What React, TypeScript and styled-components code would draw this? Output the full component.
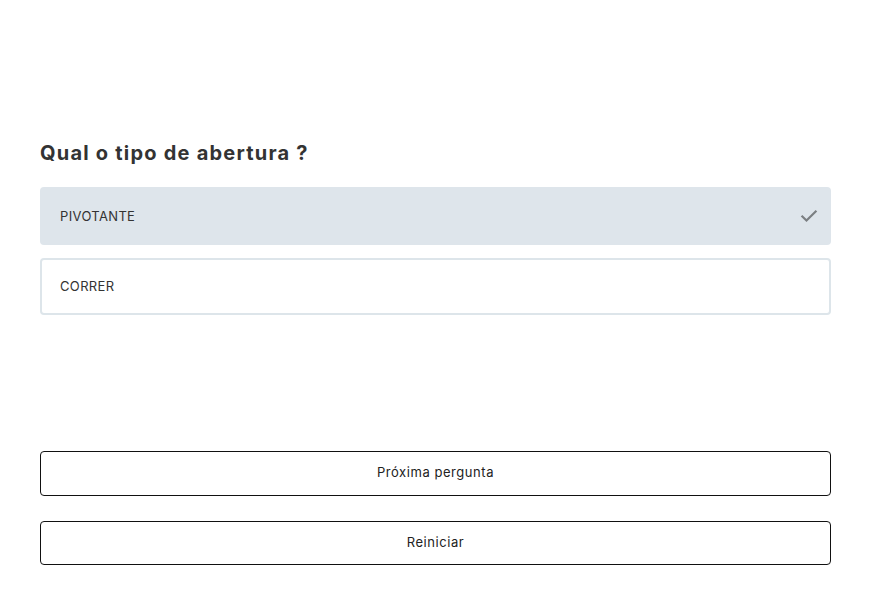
import React, { useState } from "react";
import styled, { createGlobalStyle } from "styled-components";

const Global = createGlobalStyle`
  body { margin: 0; background: #fff; font-family: "Inter", "Lato", sans-serif; }
`;

const Page = styled.div`
  padding: 140px 41px 0 40px;
  display: flex;
  flex-direction: column;
`;

const Title = styled.h2`
  margin: 0 0 21px;
  font-size: 20px;
  line-height: 26px;
  font-weight: 700;
  color: #333;
  letter-spacing: 1.22px;
`;

const Options = styled.div`
  display: flex;
  flex-direction: column;
  gap: 13px;
`;

const Option = styled.button<{ $selected: boolean }>`
  display: flex;
  align-items: center;
  justify-content: space-between;
  height: ${(p) => (p.$selected ? "58px" : "57px")};
  padding: 0 12px ${(p) => (p.$selected ? "0" : "2px")} ${(p) => (p.$selected ? "20px" : "18px")};
  box-sizing: border-box;
  border-radius: 4px;
  border: ${(p) => (p.$selected ? "none" : "2px solid #dde5ea")};
  background: ${(p) => (p.$selected ? "#dee5eb" : "#fff")};
  font-family: inherit;
  font-size: 13px;
  letter-spacing: 0.35px;
  color: #333;
  text-align: left;
  cursor: pointer;
`;

const Actions = styled.div`
  display: flex;
  flex-direction: column;
  gap: 25px;
  margin-top: 136px;
`;

const ActionButton = styled.button<{ $h?: number }>`
  height: ${(p) => p.$h ?? 45}px;
  padding: 0 0 3px;
  border: 1px solid #111;
  border-radius: 4px;
  background: #fff;
  font-family: inherit;
  font-size: 13px;
  letter-spacing: 0.55px;
  color: #222;
  cursor: pointer;
`;

const Check = () => (
  <svg width="20" height="20" viewBox="0 0 24 24" fill="none" stroke="#7b7f82" strokeWidth="2.6" strokeLinecap="square">
    <path d="M4 12.5l5 5L20 6.5" />
  </svg>
);

export default function App() {
  const [sel, setSel] = useState(0);
  const opts = ["PIVOTANTE", "CORRER"];
  return (
    <>
      <Global />
      <Page>
        <Title>Qual o tipo de abertura ?</Title>
        <Options>
          {opts.map((o, i) => (
            <Option key={o} $selected={sel === i} onClick={() => setSel(i)}>
              <span>{o}</span>
              {sel === i && <Check />}
            </Option>
          ))}
        </Options>
        <Actions>
          <ActionButton>Próxima pergunta</ActionButton>
          <ActionButton $h={44}>Reiniciar</ActionButton>
        </Actions>
      </Page>
    </>
  );
}
